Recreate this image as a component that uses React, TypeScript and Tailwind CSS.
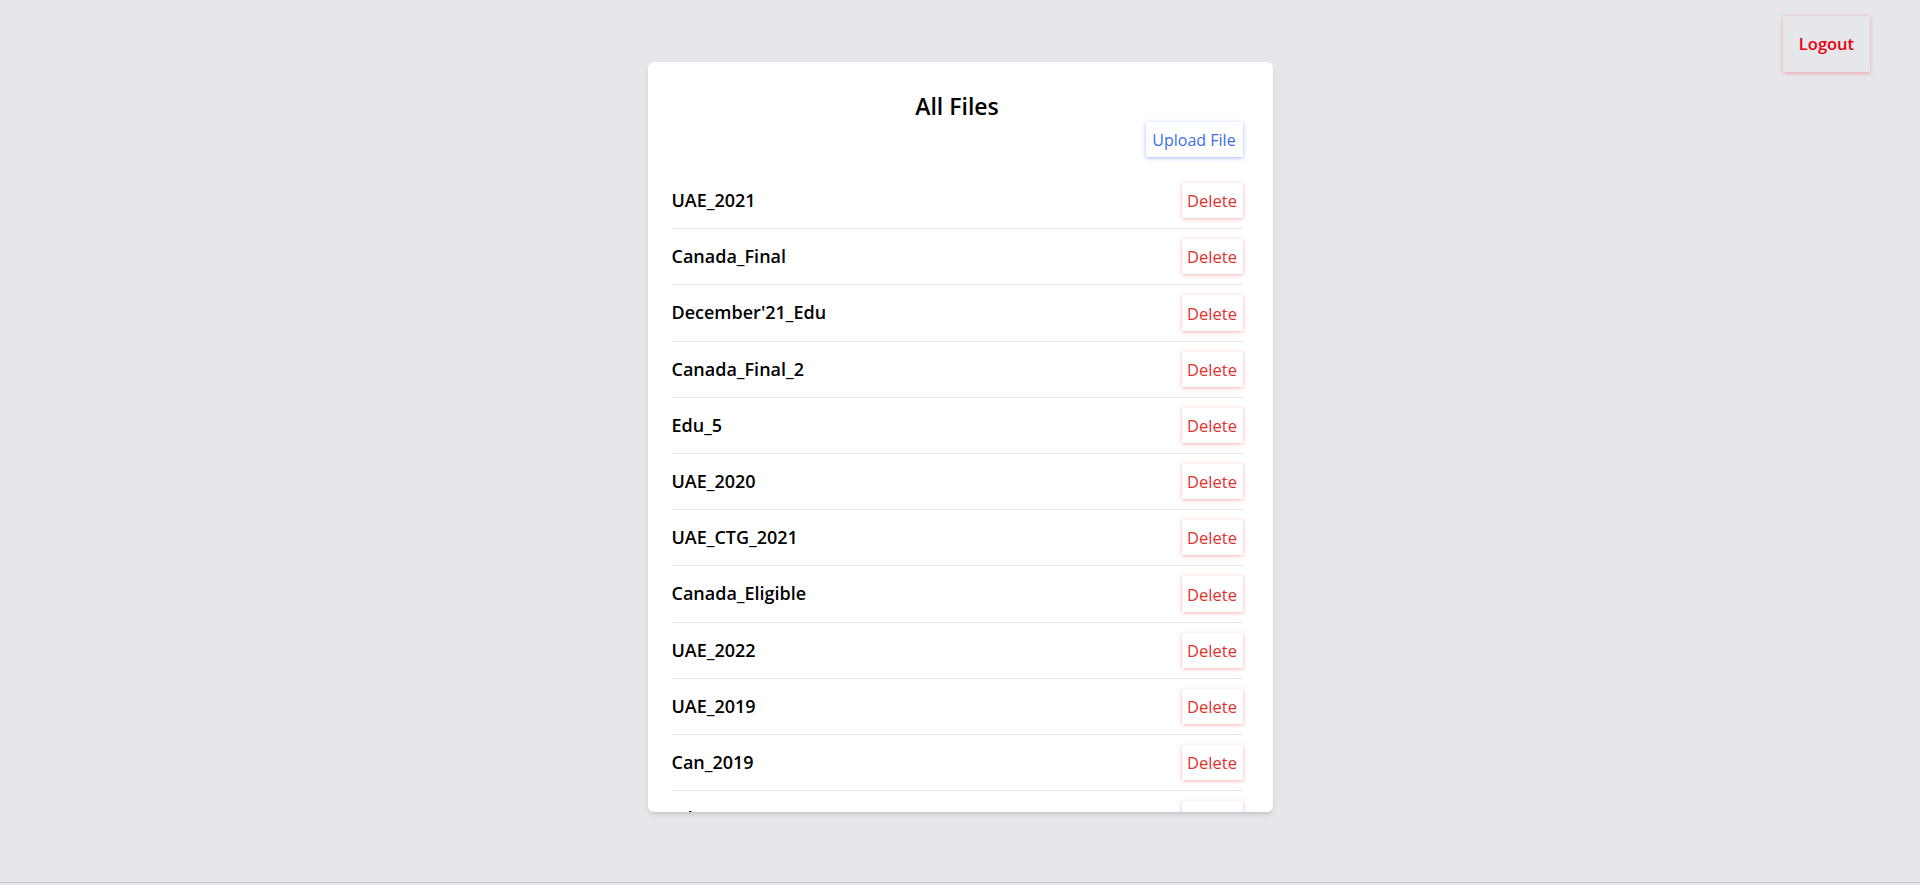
const files = [
  "UAE_2021",
  "Canada_Final",
  "December'21_Edu",
  "Canada_Final_2",
  "Edu_5",
  "UAE_2020",
  "UAE_CTG_2021",
  "Canada_Eligible",
  "UAE_2022",
  "UAE_2019",
  "Can_2019",
  "Edu_2019",
];

function FileRow({ name }: { name: string }) {
  return (
    <li className="flex items-center justify-between py-[10px] border-b border-gray-200">
      <span className="text-[18px] font-semibold text-black">{name}</span>
      <button className="h-[35.2px] w-[61px] bg-white pt-[2px] text-[16.5px] font-normal text-[#e03131] shadow-[0_1px_4px_rgba(248,113,113,0.55)]">
        Delete
      </button>
    </li>
  );
}

export default function App() {
  return (
    <div className="h-[885px] bg-gray-200 font-['Open_Sans',sans-serif]">
      <div className="relative h-[883px] border-b border-[#c9cacc] pt-[62px]">
        <button className="absolute top-4 right-[50px] h-[56px] w-[87px] bg-gray-200 text-[16.5px] font-semibold text-red-600 shadow-[0_1px_4px_rgba(248,113,113,0.6)]">
          Logout
        </button>

        <div className="mx-auto h-[750px] w-[625px] overflow-hidden rounded-md bg-white pl-6 pr-[30px] pt-[28px] shadow-md">
          <h1 className="text-center text-[23px] leading-8 font-semibold text-black">All Files</h1>
          <div className="flex justify-end">
            <button className="h-[35px] w-[97px] bg-white text-[16px] font-normal text-[#3b6fe6] shadow-[0_1px_4px_rgba(96,140,250,0.6)]">
              Upload File
            </button>
          </div>
          <ul className="mt-[16px]">
            {files.map((f) => (
              <FileRow key={f} name={f} />
            ))}
          </ul>
        </div>
      </div>
    </div>
  );
}
